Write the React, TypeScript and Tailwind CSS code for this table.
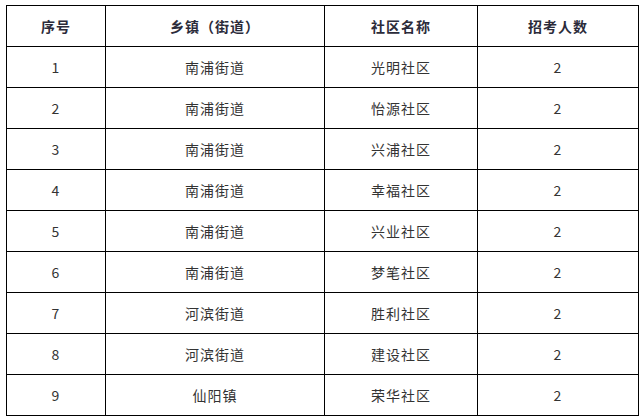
const rows = [
  ["1", "南浦街道", "光明社区", "2"],
  ["2", "南浦街道", "怡源社区", "2"],
  ["3", "南浦街道", "兴浦社区", "2"],
  ["4", "南浦街道", "幸福社区", "2"],
  ["5", "南浦街道", "兴业社区", "2"],
  ["6", "南浦街道", "梦笔社区", "2"],
  ["7", "河滨街道", "胜利社区", "2"],
  ["8", "河滨街道", "建设社区", "2"],
  ["9", "仙阳镇", "荣华社区", "2"],
];

const headers = ["序号", "乡镇（街道）", "社区名称", "招考人数"];
const widths = ["w-[99px]", "w-[219px]", "w-[153px]", "w-[161px]"];

export default function App() {
  return (
    <div className="h-[420px] w-[643px] bg-white pl-[6px] pt-[5px] font-['SimSun','Noto_Sans_CJK_SC',sans-serif]">
      <table className="w-[633px] table-fixed border-collapse border-[1.5px] border-black">
        <colgroup>
          {widths.map((w, i) => (
            <col key={i} className={w} />
          ))}
        </colgroup>
        <thead>
          <tr className="h-[41px]">
            {headers.map((h) => (
              <th
                key={h}
                className="border-[1.5px] border-black p-0 text-center text-[14px] font-bold tracking-[1px] text-[#2b2b3a]"
              >
                {h}
              </th>
            ))}
          </tr>
        </thead>
        <tbody>
          {rows.map((r) => (
            <tr key={r[0]} className="h-[41px]">
              {r.map((c, i) => (
                <td
                  key={i}
                  className="border-[1.5px] border-black p-0 text-center text-[14px] tracking-[1px] text-[#333]"
                >
                  {c}
                </td>
              ))}
            </tr>
          ))}
        </tbody>
      </table>
    </div>
  );
}
